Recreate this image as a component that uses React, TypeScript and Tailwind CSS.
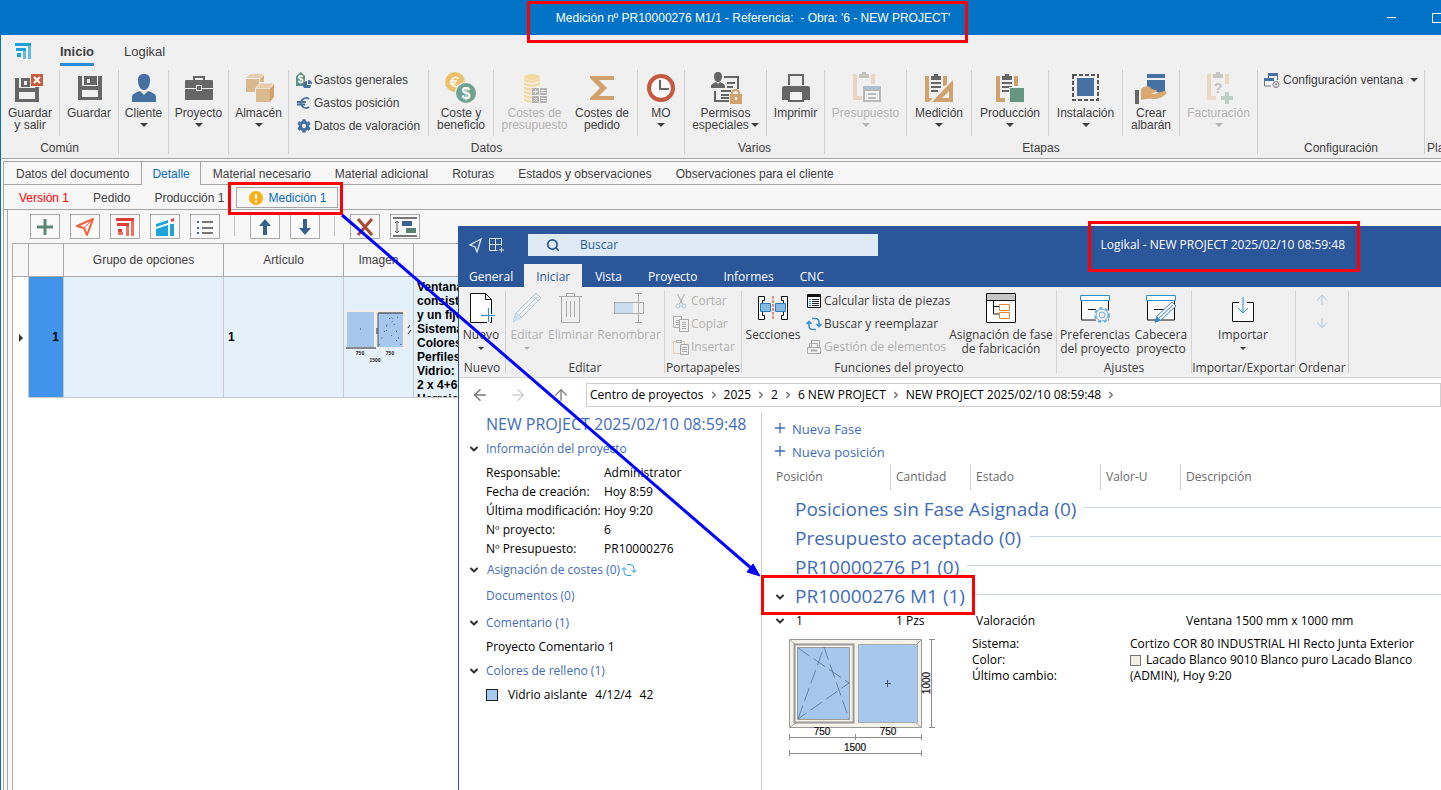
import { ReactNode } from "react";
import { ArrowDown, ArrowLeft, ArrowRight, ArrowUp, ChevronDown, ChevronRight, Plus, Search } from "lucide-react";
import { FaCog } from "react-icons/fa";

/* ---------- small helpers ---------- */

function Svg({ children, size = 32, box = 32 }: { children: ReactNode; size?: number; box?: number }) {
  return (
    <svg width={size} height={size} viewBox={`0 0 ${box} ${box}`} fill="none" aria-hidden="true" className="shrink-0">
      {children}
    </svg>
  );
}

function Caret({ className = "" }: { className?: string }) {
  return (
    <svg width="8" height="4" viewBox="0 0 8 4" aria-hidden="true" className={`inline-block ${className}`}>
      <path d="M0 0h8L4 4z" fill="currentColor" />
    </svg>
  );
}

/* ---------- icons of the main ribbon ---------- */

const floppy = "M0 0h4v10h16V0h4v24H0zM6 0h13v9H6zM9 3v4h3V3zM4 14v7h16v-7z";

const SaveExitIcon = () => (
  <Svg>
    <path transform="translate(1 6)" d={floppy} fill="#666" fillRule="evenodd" />
    <path d="M16 1h14v14H16z" fill="#f0f0f0" />
    <path d="M17 2h12v12H17z" fill="#c75b3f" />
    <path d="M20 5l6 6M26 5l-6 6" stroke="#fff" strokeWidth="2" />
  </Svg>
);

const SaveIcon = () => (
  <Svg>
    <path transform="translate(5 4)" d={floppy} fill="#666" fillRule="evenodd" />
  </Svg>
);

const ClientIcon = () => (
  <Svg>
    <path d="M16 2c4 0 6 2 6 6 0 5-2 10-6 10s-6-5-6-10c0-4 2-6 6-6z" fill="#4470a2" />
    <path d="M4 30v-5c0-3 3-4 8-6l4 4 4-4c5 2 8 3 8 6v5z" fill="#4470a2" />
  </Svg>
);

const BriefcaseIcon = () => (
  <Svg>
    <path d="M11 9V5h10v4" stroke="#666" strokeWidth="2" />
    <path d="M2 9q0-1 1-1h26q1 0 1 1v7H19v-3h-6v3H2z" fill="#666" />
    <path d="M14 14h4v4h-4z" fill="#666" />
    <path d="M2 17h11v2h6v-2h11v10q0 1-1 1H3q-1 0-1-1z" fill="#666" />
  </Svg>
);

const BoxesIcon = () => (
  <Svg>
    <path d="M3 6l4-4h14l-4 4z" fill="#e6cdb0" />
    <path d="M3 7h13v13H3z" fill="#dcb88f" />
    <path d="M17 7l4-4v7h-4z" fill="#d9b080" />
    <path d="M12 17l5-6h14l-4 6z" fill="#e6cdb0" stroke="#f0f0f0" />
    <path d="M12 17h2v14h-2z" fill="#f0f0f0" />
    <path d="M13 17h14v13H13z" fill="#dcb88f" />
    <path d="M27 17l4-5v13l-4 5z" fill="#d2a16d" />
  </Svg>
);

const ExpensesIcon = () => (
  <Svg size={16} box={16}>
    <path d="M0 4l5-4 4 4v10H0z" fill="#5f9281" />
    <text x="4.500" y="11" textAnchor="middle" fontSize="10" fontWeight="700" fill="#fff" fontFamily="Liberation Sans">$</text>
    <circle cx="12" cy="12" r="4.500" fill="#f0f0f0" />
    <path d="M11 9v4h4a4 4 0 1 1-4-4z" fill="#4470a2" />
    <path d="M12 8a4 4 0 0 1 4 4h-4z" fill="#4470a2" />
  </Svg>
);

const EuroIcon = () => (
  <Svg size={16} box={16}>
    <path d="M13 4A5 5 0 1 0 13 12M1 7h9M1 9.500h8" stroke="#4470a2" strokeWidth="1.800" />
  </Svg>
);

const CoinsIcon = () => (
  <Svg>
    <circle cx="10" cy="10" r="10" fill="#efc06c" />
    <path d="M13.500 6.500a4.500 4.500 0 1 0 0 7M5 9h7M5 11.500h6" stroke="#fff" strokeWidth="1.600" />
    <circle cx="21" cy="21" r="11" fill="#f0f0f0" />
    <circle cx="21" cy="21" r="10" fill="#6fa391" />
    <text x="21" y="26.500" textAnchor="middle" fontSize="16" fontWeight="700" fill="#fff" fontFamily="Liberation Sans">$</text>
  </Svg>
);

const BudgetCostIcon = () => (
  <Svg>
    <ellipse cx="13" cy="5" rx="8" ry="3" fill="#f2d9a0" />
    {[6, 10, 14, 18, 22, 26].map((y) => (
      <path key={y} d={`M5 ${y}q8 5 16 0v3q-8 4-16 0z`} fill="#f4dba4" />
    ))}
    <path d="M13 15h16v16H13z" fill="#f0f0f0" />
    <path d="M13 16h7v7h-7zM21 16h7v7h-7zM13 24h7v7h-7zM21 24h7v7h-7z" fill="#b5b5b5" />
    <path d="M14 19.500h5M16.500 17v5M22 18.500h5M22 20.500h5M15 26l3 3M18 26l-3 3M22 26.500h5M22 28.500h5" stroke="#f0f0f0" />
  </Svg>
);

const SigmaIcon = () => (
  <Svg>
    <path d="M4 4h24v4H13l8 8-8 8h15v4H4v-2l10-10L4 6z" fill="#d2a26e" />
  </Svg>
);

const ClockIcon = () => (
  <Svg>
    <circle cx="16" cy="16" r="12" stroke="#c65a40" strokeWidth="4" fill="#f8f8f8" />
    <path d="M15 8v9h9" stroke="#666" strokeWidth="2" />
  </Svg>
);

const PermissionsIcon = () => (
  <Svg>
    <path d="M14 5h14v12M5 19v10h14" stroke="#666" strokeWidth="2" />
    <path d="M17 11h8M17 15h6M11 19h10M11 23h8M11 26h8" stroke="#666" strokeWidth="2" />
    <path d="M8 0c3 0 4 2 4 5s-2 5-4 5-4-2-4-5 1-5 4-5z" fill="#666" />
    <path d="M1 16v-2c0-2 3-3 5-4l2 2 2-2c2 1 5 2 5 4v2z" fill="#666" />
    <path d="M22 24v-3q0-3 3.500-3t3.500 3v3" stroke="#d2a26e" strokeWidth="2" fill="#f0f0f0" />
    <path d="M20 22h12v10H20z" fill="#d2a26e" />
    <path d="M25 25h2v3h-2z" fill="#fff" />
  </Svg>
);

const PrinterIcon = () => (
  <Svg>
    <path d="M9 13V3h14v10" stroke="#666" strokeWidth="2" />
    <path d="M2 16q0-2 2-2h24q2 0 2 2v12H2z" fill="#666" />
    <path d="M9 19h14v10H9z" fill="#f4f4f4" stroke="#666" strokeWidth="2" />
  </Svg>
);

function Clipboard({ x, y = 0, board, clip, lines }: { x: number; y?: number; board: string; clip: string; lines?: boolean }) {
  return (
    <g transform={`translate(${x} ${y})`}>
      <path d="M0 2h4v22h5v4H0zM18 2h4v10h-4z" fill={board} />
      <path d="M6 2h3V0h4v2h3v4H6z" fill={clip} />
      {lines && <path d="M6 9h10M6 13h10M6 17h7" stroke={clip} strokeWidth="2" />}
    </g>
  );
}

const BudgetIcon = () => (
  <Svg>
    <Clipboard x={3} board="#e8d6c2" clip="#c2c2c2" />
    <path d="M13 14h18v4H13z" fill="#adc0d6" />
    <path d="M14 18h16v11H14z" fill="#f4f4f4" stroke="#b8b8b8" strokeWidth="2" />
    <path d="M18 22h8M18 26h8" stroke="#b8b8b8" strokeWidth="2" />
  </Svg>
);

const MeasureIcon = () => (
  <Svg>
    <Clipboard x={2} y={2} board="#d2a26e" clip="#666" lines />
    <path d="M30 6v25H5z" fill="#f0f0f0" />
    <path fillRule="evenodd" d="M30 8v22H9zM26 19v7h-7z" fill="#d2a26e" />
  </Svg>
);

const ProductionIcon = () => (
  <Svg>
    <Clipboard x={2} y={2} board="#d2a26e" clip="#666" lines />
    <path d="M15 15h16v16H15z" fill="#f0f0f0" />
    <path d="M16 16h14v14H16z" fill="#659583" />
  </Svg>
);

const InstallIcon = () => (
  <Svg>
    <path d="M3 3h25v25H3z" stroke="#555" strokeWidth="2" strokeDasharray="4 2" />
    <path d="M7 6h17v18H7z" fill="#4470a2" />
  </Svg>
);

const DeliveryIcon = () => (
  <Svg>
    <path d="M12 2h18v4H12zM12 8h18v11l-5 2q-8-2-13-5z" fill="#4470a2" />
    <path d="M0 18h4v14H0z" fill="#666" />
    <path d="M6 17q4-4 9-2 2 3 7 3 0 3-6 3l3 1 10-3q4 0 2 3-5 5-12 5-7-1-13 1z" fill="#d9a871" />
  </Svg>
);

const InvoiceIcon = () => (
  <Svg>
    <Clipboard x={4} board="#ead9c6" clip="#c6c6c6" />
    <text x="15" y="21" textAnchor="middle" fontSize="14" fontWeight="700" fill="#c2c2c2" fontFamily="Liberation Sans">?</text>
    <path d="M18 24h4v-4h4v4h4v4h-4v4h-4v-4h-4z" fill="#bcd0c8" />
  </Svg>
);

const WindowConfigIcon = () => (
  <Svg size={16} box={16}>
    <path d="M4 1h10v3H4z" fill="#4470a2" />
    <path d="M4.500 4v2M13.500 4v4" stroke="#4470a2" />
    <path d="M0 6h10v3H0z" fill="#4470a2" />
    <path d="M.500 9v5H7" stroke="#777" />
    <circle cx="12" cy="12.500" r="3" stroke="#777" />
    <circle cx="12" cy="12.500" r="1" fill="#777" />
  </Svg>
);

const BrandIcon = () => (
  <Svg size={16} box={16}>
    <path d="M0 0h16v3H0z" fill="#1aa3dc" />
    <path d="M13 3h3v13h-3z" fill="#63b9e0" />
    <path d="M1 5h10v3H1z" fill="#1aa3dc" />
    <path d="M8 8h3v8H8z" fill="#63b9e0" />
    <path d="M2 10h4v4H2z" fill="#1aa3dc" />
  </Svg>
);

/* ---------- main ribbon ---------- */

const Sep = ({ short }: { short?: boolean }) => (
  <div className={`w-px shrink-0 bg-[#cfcfcf] ${short ? "my-[3px]" : "mt-[3px] mb-1"}`} />
);

type RibbonButtonProps = {
  icon: ReactNode;
  lines: string[];
  width: string;
  caret?: boolean;
  disabled?: boolean;
};

function RibbonButton({ icon, lines, width, caret, disabled }: RibbonButtonProps) {
  return (
    <button
      type="button"
      disabled={disabled}
      className={`flex shrink-0 flex-col items-center whitespace-nowrap pt-[5px] leading-3 ${width} ${
        disabled ? "text-[#b3b3b3]" : "text-[#404040]"
      }`}
    >
      {icon}
      <span className="mt-[3px]">{lines[0]}</span>
      {lines[1] && (
        <span className="flex items-center gap-[2px]">
          {lines[1]}
          {caret && <Caret />}
        </span>
      )}
      {caret && !lines[1] && <Caret className="mt-1" />}
    </button>
  );
}

function Group({ label, children, width = "" }: { label?: string; children: ReactNode; width?: string }) {
  return (
    <>
      <section className={`flex shrink-0 flex-col ${width}`}>
        <div className="flex h-[72px]">{children}</div>
        <div className="text-center leading-[18px]">{label}</div>
      </section>
      <Sep />
    </>
  );
}

function SmallItem({ icon, label }: { icon: ReactNode; label: string }) {
  return (
    <button type="button" className="flex h-[23px] items-center gap-[2px] whitespace-nowrap">
      {icon}
      {label}
    </button>
  );
}

function MainRibbon() {
  return (
    <div className="flex h-[92px] shrink-0 overflow-hidden border-b border-[#a6a6a6] bg-[#f0f0f0]">
      <Group label="Común">
        <RibbonButton width="w-[58px]" icon={<SaveExitIcon />} lines={["Guardar", "y salir"]} />
        <Sep short />
        <RibbonButton width="w-[58px]" icon={<SaveIcon />} lines={["Guardar"]} />
      </Group>
      <Group>
        <RibbonButton width="w-[49px]" icon={<ClientIcon />} lines={["Cliente"]} caret />
      </Group>
      <Group>
        <RibbonButton width="w-[59px]" icon={<BriefcaseIcon />} lines={["Proyecto"]} caret />
      </Group>
      <Group>
        <RibbonButton width="w-[59px]" icon={<BoxesIcon />} lines={["Almacén"]} caret />
      </Group>
      <Group label="Datos">
        <div className="flex w-[139px] flex-col items-start pl-[7px] pt-px">
          <SmallItem icon={<ExpensesIcon />} label="Gastos generales" />
          <SmallItem icon={<EuroIcon />} label="Gastos posición" />
          <SmallItem icon={<FaCog size={16} className="p-px text-[#4470a2]" />} label="Datos de valoración" />
        </div>
        <Sep short />
        <RibbonButton width="w-[64px]" icon={<CoinsIcon />} lines={["Coste y", "beneficio"]} />
        <Sep short />
        <RibbonButton width="w-[81px]" icon={<BudgetCostIcon />} lines={["Costes de", "presupuesto"]} disabled />
        <RibbonButton width="w-[54px]" icon={<SigmaIcon />} lines={["Costes de", "pedido"]} />
        <div className="w-2" />
        <Sep short />
        <RibbonButton width="w-[46px]" icon={<ClockIcon />} lines={["MO"]} caret />
      </Group>
      <Group label="Varios">
        <RibbonButton width="w-[81px]" icon={<PermissionsIcon />} lines={["Permisos", "especiales"]} caret />
        <Sep short />
        <RibbonButton width="w-[57px]" icon={<PrinterIcon />} lines={["Imprimir"]} />
      </Group>
      <Group label="Etapas">
        <RibbonButton width="w-[81px]" icon={<BudgetIcon />} lines={["Presupuesto"]} caret disabled />
        <Sep short />
        <RibbonButton width="w-[64px]" icon={<MeasureIcon />} lines={["Medición"]} caret />
        <Sep short />
        <RibbonButton width="w-[76px]" icon={<ProductionIcon />} lines={["Producción"]} caret />
        <Sep short />
        <RibbonButton width="w-[73px]" icon={<InstallIcon />} lines={["Instalación"]} caret />
        <Sep short />
        <RibbonButton width="w-[56px]" icon={<DeliveryIcon />} lines={["Crear", "albarán"]} />
        <Sep short />
        <RibbonButton width="w-[77px]" icon={<InvoiceIcon />} lines={["Facturación"]} caret disabled />
      </Group>
      <Group label="Configuración" width="w-[166px]">
        <div className="flex items-start pl-[6px] pt-px">
          <button type="button" className="flex h-[23px] items-center whitespace-nowrap">
            <WindowConfigIcon />
            <span className="ml-[3px] mr-[7px]">Configuración ventana</span>
            <Caret />
          </button>
        </div>
      </Group>
      <Group label="Plazos" width="w-[40px]">
        {null}
      </Group>
    </div>
  );
}

/* ---------- toolbar over the grid ---------- */

const toolIcons: (ReactNode | null)[] = [
  <Svg key="add" size={20} box={20}>
    <path d="M10 2v16M2 10h16" stroke="#5f8573" strokeWidth="3" />
  </Svg>,
  <Svg key="send" size={20} box={20}>
    <path d="M18 2L2 9l7 2 3 7z" stroke="#f0613c" strokeWidth="2" strokeLinejoin="round" />
    <path d="M18 2l-8 8" stroke="#f0613c" />
  </Svg>,
  <Svg key="frames" size={20} box={20}>
    <path d="M1 1h18v3H1zM2 6h12v3H2zM3 12h4v3H3z" fill="#e23b38" />
    <path d="M16 4h3v15h-3zM11 9h3v10h-3zM3 15h5v3H3z" fill="#ee7160" />
  </Svg>,
  <Svg key="build" size={20} box={20}>
    <path d="M1 7l12-4v3L1 10zM1 12l12-4v11H1zM15 7h4v12h-4z" fill="#1ea4dc" />
    <path d="M16 2l3-1v3l-3 1z" fill="#ee3a4c" />
  </Svg>,
  <Svg key="list" size={20} box={20}>
    <path d="M7 5h11M7 11h11M7 16h11" stroke="#777" strokeWidth="2" />
    <path d="M2 4h2v2H2zM2 10h2v2H2zM2 15h2v2H2z" fill="#3d6690" />
  </Svg>,
  null,
  <Svg key="up" size={20} box={20}>
    <path d="M8 18V9H4l6-7 6 7h-4v9z" fill="#38618c" />
  </Svg>,
  <Svg key="down" size={20} box={20}>
    <path d="M8 2v9H4l6 7 6-7h-4V2z" fill="#38618c" />
  </Svg>,
  null,
  <Svg key="remove" size={20} box={20}>
    <path d="M3 2l14 16M17 2L3 18" stroke="#a94a32" strokeWidth="3" />
  </Svg>,
  <svg key="rows" width="24" height="20" viewBox="0 0 24 20" fill="none">
    <path d="M0 1h24M0 19h24" stroke="#777" strokeWidth="2" />
    <path d="M4 4v12M2 6l2-2 2 2M2 14l2 2 2-2" stroke="#555" />
    <path d="M9 4h10v5H9z" fill="#3a628f" />
    <path d="M13 11h10v5H13z" fill="#568070" />
  </svg>,
];

const toolNames = ["Añadir", "Enviar", "Logikal", "Montaje", "Lista", "", "Subir", "Bajar", "", "Eliminar", "Altura de filas"];

function Toolbar() {
  return (
    <div className="flex h-[33px] shrink-0 items-start gap-[10px] pl-[22px] pt-1">
      {toolIcons.map((icon, i) =>
        icon ? (
          <button
            key={i}
            type="button"
            aria-label={toolNames[i]}
            className="flex h-[25px] w-[30px] items-center justify-center border border-[#a9a9a9] bg-[#fafafa]"
          >
            {icon}
          </button>
        ) : (
          <div key={i} className="w-[10px] pl-1">
            <div className="mt-[2px] h-5 w-px bg-[#bcc4ce]" />
          </div>
        )
      )}
    </div>
  );
}

const Thumbnail = () => (
  <svg width="69" height="60" viewBox="0 0 69 60" fill="none" aria-label="Ventana">
    <path d="M2 3h30v38H2zM32 3h31v38H32z" fill="#f3efe8" />
    <path d="M3 5h27v35H3zM34 6h25v34H34z" fill="#a6c8ee" />
    <path d="M2 41h30M34 6h25M33 21v6" stroke="#222" strokeWidth="1" />
    <path d="M34 6v34" stroke="#555" />
    <path d="M35 38l12-30 10 30M54 10L40 21l15 15" stroke="#345" strokeWidth="1" strokeDasharray="1 6" />
    <path d="M16 22h1M64 27l3-4M64 21l2-3" stroke="#333" />
    <text x="16" y="48" fontSize="5" textAnchor="middle" fill="#222" fontFamily="Liberation Sans">750</text>
    <text x="46" y="48" fontSize="5" textAnchor="middle" fill="#222" fontFamily="Liberation Sans">750</text>
    <text x="31" y="55" fontSize="5" textAnchor="middle" fill="#222" fontFamily="Liberation Sans">1500</text>
  </svg>
);

const description = [
  "Ventana",
  "consistente",
  "y un fijo",
  "Sistema:",
  "Colores:",
  "Perfiles:",
  "Vidrio:",
  "2 x 4+6",
  "Herraje",
];

function OptionsGrid() {
  const th = "border-r border-b border-[#ababab] font-normal";
  return (
    <table className="w-full table-fixed border-separate border-spacing-0">
      <colgroup>
        <col className="w-[16px]" />
        <col className="w-[35px]" />
        <col className="w-[160px]" />
        <col className="w-[120px]" />
        <col className="w-[70px]" />
        <col />
      </colgroup>
      <thead className="bg-[#f7f7f7]">
        <tr className="h-[33px]">
          <th className={th} />
          <th className={th} />
          <th className={th}>Grupo de opciones</th>
          <th className={th}>Artículo</th>
          <th className={th}>Imagen</th>
          <th className="border-b border-[#ababab]" />
        </tr>
      </thead>
      <tbody>
        <tr className="h-[121px] bg-[#e4f1fa] font-bold text-black">
          <td className="border-r border-[#c8c8c8] bg-white">
            <svg width="4" height="8" viewBox="0 0 4 8" className="mx-auto" aria-hidden="true">
              <path d="M0 0l4 4-4 4z" fill="#333" />
            </svg>
          </td>
          <td className="border-r border-b border-[#c8c8c8] bg-[#4094ea] pr-1 text-right">1</td>
          <td className="border-r border-b border-[#c8c8c8]" />
          <td className="border-r border-b border-[#c8c8c8] pl-1">1</td>
          <td className="border-r border-b border-[#c8c8c8]">
            <Thumbnail />
          </td>
          <td className="border-b border-[#c8c8c8] pl-[3px]">
            <div className="h-[119px] overflow-hidden whitespace-nowrap pt-[2px] leading-[14px]">
              {description.map((line) => (
                <div key={line}>{line}</div>
              ))}
            </div>
          </td>
        </tr>
      </tbody>
    </table>
  );
}

/* ---------- Logikal window icons ---------- */

const NewFileIcon = () => (
  <Svg>
    <path d="M5.500 2.500h15l6 6v23h-21z" fill="#fff" stroke="#111" />
    <path d="M20.500 2.500v6h6" stroke="#111" />
    <path d="M23.500 16v16M15 24.500h16" stroke="#f0f0f0" strokeWidth="3" />
    <path d="M23.500 17v14M16 24.500h14" stroke="#2b8fd0" />
  </Svg>
);
const PencilIcon = () => (
  <Svg>
    <path d="M2 31l3-9L25 2l5 5-19 19zM5 22l6 5M22 5l5 5M8 24L26 6" stroke="#b4cfe2" />
    <path d="M2 31l3-8 5 5z" fill="#c9dfee" />
  </Svg>
);
const TrashIcon = () => (
  <Svg>
    <path d="M4 5.500h23M11.500 5V2.500h8V5M6.500 6v25.500h18V6M11.500 10v16M15.500 10v16M19.500 10v16" stroke="#a9a9a9" />
  </Svg>
);
const RenameIcon = () => (
  <Svg>
    <path d="M1 11h19v11H1z" fill="#c8dff0" />
    <path d="M1.500 11.500h29v11h-29zM25.500 2v30M22 2.500h7M22 31.500h7" stroke="#a9a9a9" />
  </Svg>
);
const SectionsIcon = () => (
  <Svg>
    <path d="M1.500 5.500h6v4h-2v15h2v4h-6zM30.500 5.500h-6v4h2v15h-2v4h6z" fill="#fff" stroke="#111" />
    <path d="M3.500 12.500h10v8h-10zM18.500 12.500h10v8h-10z" fill="#84b9e6" stroke="#2f7bbd" />
    <path d="M16 5v24" stroke="#e02020" strokeDasharray="3 1" />
  </Svg>
);
const PhaseIcon = () => (
  <Svg>
    <path d="M1.500 2.500h29v29h-29z" fill="#fff" stroke="#111" />
    <path d="M2 3h28v6H2z" fill="#c6c6c6" />
    <path d="M1 9.500h30M8.500 10v13h6M8.500 15.500h6" stroke="#111" />
    <path d="M14.500 13.500h10v6h-10zM14.500 21.500h10v6h-10z" stroke="#ee8233" />
  </Svg>
);
const PreferencesIcon = () => (
  <Svg>
    <path d="M2.500 9v20h27V9" fill="#fafafa" stroke="#111" />
    <path d="M1.500 4.500h29v5h-29z" fill="#fff" stroke="#2b8fd0" />
    <path d="M9 18.500h8" stroke="#111" />
    <circle cx="23" cy="24" r="8" fill="#f4f4f4" />
    <circle cx="23" cy="24" r="7" stroke="#6fb0de" strokeWidth="2" strokeDasharray="3 3" />
    <circle cx="23" cy="24" r="6" stroke="#6fb0de" />
    <circle cx="23" cy="24" r="3" stroke="#6fb0de" />
  </Svg>
);
const HeaderIcon = () => (
  <Svg>
    <path d="M2.500 9v20h27V9" fill="#fafafa" stroke="#111" />
    <path d="M1.500 4.500h29v5h-29z" fill="#fff" stroke="#2b8fd0" />
    <path d="M9 18.500h10" stroke="#111" />
    <path d="M10 31l2-6 15-14 4 4-15 14z" fill="#f4f4f4" stroke="#3d85c0" />
    <path d="M14 27L28 14M10 31l2-5 3 3z" stroke="#3d85c0" fill="#3d85c0" />
  </Svg>
);
const ImportIcon = () => (
  <Svg>
    <path d="M12 11.500H5.500v19h21v-19H20" stroke="#111" />
    <path d="M6 12h20v18H6z" fill="#fafafa" />
    <path d="M16 6v16M11 17l5 5 5-5" stroke="#2b8fd0" />
  </Svg>
);
const CutIcon = () => (
  <Svg size={16} box={16}>
    <path d="M4.500 1l5 10M11.500 1l-5 10" stroke="#a9a9a9" />
    <circle cx="5" cy="13" r="2" stroke="#a5cbe6" />
    <circle cx="11" cy="13" r="2" stroke="#a5cbe6" />
  </Svg>
);
const CopyIcon = () => (
  <Svg size={16} box={16}>
    <path d="M.500.500h8v11h-8zM3 4.500h4M3 6.500h4M3 8.500h3" stroke="#b0b0b0" />
    <path d="M6.500 3.500h9v12h-9z" fill="#f0f0f0" stroke="#a9a9a9" />
    <path d="M9 6.500h4M9 8.500h4M9 10.500h4M9 12.500h4" stroke="#a9a9a9" />
  </Svg>
);
const PasteIcon = () => (
  <Svg size={16} box={16}>
    <path d="M.500 2.500h11v12h-11z" stroke="#efcdb0" />
    <path d="M3.500 3.500v-2h5v2z" stroke="#b0b0b0" fill="#f0f0f0" />
    <path d="M7.500 5.500h8v10h-8z" fill="#f0f0f0" stroke="#a9a9a9" />
    <path d="M9 8.500h5M9 10.500h5M9 12.500h5" stroke="#a9a9a9" />
  </Svg>
);
const PartsListIcon = () => (
  <Svg size={16} box={16}>
    <path d="M1.500 1.500h13v13h-13z" stroke="#111" fill="#fff" />
    <path d="M1 3h14" stroke="#111" strokeWidth="2" />
    <path d="M6 6.500h7M6 8.500h7M6 10.500h7M6 12.500h7" stroke="#222" />
    <path d="M3 6.500h2M3 8.500h2M3 10.500h2M3 12.500h2" stroke="#2b8fd0" />
  </Svg>
);
const StackIcon = () => (
  <Svg size={16} box={16}>
    <path d="M5.500 8V1.500h8V8M3.500 8V4.500h8V8M1.500 8.500h13v6h-13z" stroke="#a9a9a9" />
    <path d="M5 11.500h6" stroke="#a9a9a9" strokeWidth="2" />
  </Svg>
);

// two half circles chasing each other
const CycleIcon = ({ bold }: { bold?: boolean }) => (
  <Svg size={16} box={16}>
    <path
      d="M6 2.500h3q4 0 4 4V10M10.500 8l2.500 2.500L15.500 8M10 13.500H7q-4 0-4-4V6M.500 8L3 5.500 5.500 8"
      stroke={bold ? "#3d93d0" : "#2b9bd0"}
      strokeWidth={bold ? 1.6 : 1}
    />
  </Svg>
);

/* ---------- Logikal window ---------- */

const WinSep = () => <div className="mt-1 mb-1 w-px shrink-0 bg-[#d2d2d2]" />;

function WinGroup({ label, width, children }: { label: string; width: string; children: ReactNode }) {
  return (
    <>
      <section className={`flex shrink-0 flex-col items-center ${width}`}>
        <div className="flex h-[73px] w-full">{children}</div>
        <div className="whitespace-nowrap leading-4">{label}</div>
      </section>
      <WinSep />
    </>
  );
}

function WinButton({ icon, lines, width, caret, disabled }: RibbonButtonProps) {
  return (
    <button
      type="button"
      disabled={disabled}
      className={`flex shrink-0 flex-col items-center whitespace-nowrap pt-1 leading-[14px] ${width} ${
        disabled ? "text-[#b0b0b0]" : "text-[#3b3b3b]"
      }`}
    >
      {icon}
      <span className="mt-[5px]">{lines[0]}</span>
      {lines[1] && <span>{lines[1]}</span>}
      {caret && <Caret className="mt-[5px] h-[3px] w-[6px]" />}
    </button>
  );
}

function WinItem({ icon, label, disabled }: { icon: ReactNode; label: string; disabled?: boolean }) {
  return (
    <button
      type="button"
      disabled={disabled}
      className={`flex h-[23px] items-center gap-[2px] whitespace-nowrap ${disabled ? "text-[#b0b0b0]" : ""}`}
    >
      {icon}
      {label}
    </button>
  );
}

function WinRibbon() {
  return (
    <div className="flex h-[91px] shrink-0 overflow-hidden border-b border-[#d2d2d2] bg-[#f0f0f0] text-[#3b3b3b]">
      <WinGroup label="Nuevo" width="w-[46px]">
        <WinButton width="w-[44px]" icon={<NewFileIcon />} lines={["Nuevo"]} caret />
      </WinGroup>
      <WinGroup label="Editar" width="w-[158px]">
        <WinButton width="w-[42px]" icon={<PencilIcon />} lines={["Editar"]} caret disabled />
        <WinButton width="w-[46px]" icon={<TrashIcon />} lines={["Eliminar"]} disabled />
        <WinButton width="w-[70px]" icon={<RenameIcon />} lines={["Renombrar"]} disabled />
      </WinGroup>
      <WinGroup label="Portapapeles" width="w-[76px]">
        <div className="flex flex-col items-start pl-2 pt-[2px]">
          <WinItem icon={<CutIcon />} label="Cortar" disabled />
          <WinItem icon={<CopyIcon />} label="Copiar" disabled />
          <WinItem icon={<PasteIcon />} label="Insertar" disabled />
        </div>
      </WinGroup>
      <WinGroup label="Funciones del proyecto" width="w-[314px]">
        <WinButton width="w-[62px]" icon={<SectionsIcon />} lines={["Secciones"]} />
        <div className="flex w-[144px] flex-col items-start pl-[2px] pt-[2px]">
          <WinItem icon={<PartsListIcon />} label="Calcular lista de piezas" />
          <WinItem icon={<CycleIcon bold />} label="Buscar y reemplazar" />
          <WinItem icon={<StackIcon />} label="Gestión de elementos" disabled />
        </div>
        <WinButton width="w-[106px]" icon={<PhaseIcon />} lines={["Asignación de fase", "de fabricación"]} />
      </WinGroup>
      <WinGroup label="Ajustes" width="w-[134px]">
        <WinButton width="w-[76px]" icon={<PreferencesIcon />} lines={["Preferencias", "del proyecto"]} />
        <WinButton width="w-[56px]" icon={<HeaderIcon />} lines={["Cabecera", "proyecto"]} />
      </WinGroup>
      <WinGroup label="Importar/Exportar" width="w-[103px]">
        <WinButton width="w-[102px]" icon={<ImportIcon />} lines={["Importar"]} caret />
      </WinGroup>
      <WinGroup label="Ordenar" width="w-[52px]">
        <div className="flex w-full flex-col items-center gap-[7px] pt-[5px] text-[#a9cbe2]">
          <button type="button" aria-label="Subir">
            <ArrowUp size={16} strokeWidth={1.5} />
          </button>
          <button type="button" aria-label="Bajar">
            <ArrowDown size={16} strokeWidth={1.5} />
          </button>
        </div>
      </WinGroup>
    </div>
  );
}

const crumbs = ["Centro de proyectos", "2025", "2", "6 NEW PROJECT", "NEW PROJECT 2025/02/10 08:59:48"];

function Breadcrumbs() {
  return (
    <div className="flex h-[34px] shrink-0 items-center pl-3">
      <button type="button" aria-label="Atrás" className="text-[#777]">
        <ArrowLeft size={18} strokeWidth={2} />
      </button>
      <button type="button" aria-label="Adelante" className="ml-5 text-[#d0d0d0]">
        <ArrowRight size={18} strokeWidth={2} />
      </button>
      <button type="button" aria-label="Arriba" className="ml-[25px] text-[#888]">
        <ArrowUp size={18} strokeWidth={2} />
      </button>
      <nav className="ml-4 flex h-6 flex-1 items-center border border-[#cfcfcf] pl-[3px]">
        {crumbs.map((crumb) => (
          <span key={crumb} className="flex items-center whitespace-nowrap">
            <a href="#">{crumb}</a>
            <ChevronRight size={10} strokeWidth={4} className="mx-[5px] text-[#777]" />
          </span>
        ))}
      </nav>
    </div>
  );
}

const projectInfo = [
  ["Responsable:", "Administrator"],
  ["Fecha de creación:", "Hoy 8:59"],
  ["Última modificación:", "Hoy 9:20"],
  ["Nº proyecto:", "6"],
  ["Nº Presupuesto:", "PR10000276"],
];

function PanelHeading({ label, height, open = true, extra }: { label: string; height: string; open?: boolean; extra?: ReactNode }) {
  return (
    <button type="button" className={`flex items-center text-[#3f6cb8] ${height}`}>
      <span className="w-[18px] text-[#333]">{open && <ChevronDown size={12} strokeWidth={4} />}</span>
      {label}
      {extra}
    </button>
  );
}

function ProjectPanel() {
  return (
    <aside className="flex w-[303px] shrink-0 flex-col items-start border-r border-[#d0d0d0] pl-[9px]">
      <h2 className="pl-[18px] text-[16px] leading-[25px] whitespace-nowrap text-[#3f6cb8]">
        NEW PROJECT 2025/02/10 08:59:48
      </h2>
      <PanelHeading label="Información del proyecto" height="h-[26px] pb-[3px]" />
      <table className="ml-[18px] border-collapse">
        <tbody>
          {projectInfo.map(([name, value]) => (
            <tr key={name} className="h-[19px] whitespace-nowrap">
              <th scope="row" className="w-[118px] text-left font-normal">
                {name}
              </th>
              <td>{value}</td>
            </tr>
          ))}
        </tbody>
      </table>
      <PanelHeading label="Asignación de costes (0)" height="h-6 gap-px" extra={<CycleIcon />} />
      <PanelHeading label="Documentos (0)" height="h-7" open={false} />
      <PanelHeading label="Comentario (1)" height="h-[25px]" />
      <p className="h-6 pl-[18px] leading-6">Proyecto Comentario 1</p>
      <PanelHeading label="Colores de relleno (1)" height="h-6" />
      <div className="flex h-6 items-center pl-[18px]">
        <span className="size-3 border border-[#222] bg-[#a5c8ee]" />
        <span className="ml-[10px]">Vidrio aislante</span>
        <span className="ml-2">4/12/4</span>
        <span className="ml-2">42</span>
      </div>
    </aside>
  );
}

const WindowDrawing = () => (
  <svg width="150" height="122" viewBox="0 0 150 122" fill="none" aria-label="Ventana 1500 mm x 1000 mm">
    <path d="M2.500 3.500h132v88H2.500z" fill="#f5f2ea" stroke="#999" />
    <path d="M3 4l6 5M134 4l-5 5M3 91l6-4M134 91l-5-4" stroke="#aaa" />
    <path d="M7.500 8.500h59v78h-59z" fill="#f5f2ea" stroke="#9a9a9a" strokeWidth="2" />
    <path d="M10.500 11.500h52v72h-52z" fill="#a6c8ee" stroke="#9a9a9a" />
    <path d="M71.500 8.500h59v78h-59z" fill="#a6c8ee" stroke="#aaa" />
    <path d="M11 83l26-72 25 72M11 12l51 35-51 36" stroke="#56708f" strokeWidth=".8" strokeDasharray="14 5" />
    <path d="M98 47.500h6M100.500 44v7" stroke="#456" />
    <path d="M144.500 3v89M142 3.500h6M142 91.500h6M2 101.500h133M2.500 98v6M68.500 98v6M134.500 98v6M2 117.500h133M2.500 114v6M134.500 114v6" stroke="#8c8c8c" />
    <g fontSize="10" textAnchor="middle" fill="#111" stroke="#111" strokeWidth=".2" fontFamily="Liberation Sans">
      <text x="35" y="99">750</text>
      <text x="101" y="99">750</text>
      <text x="68" y="115">1500</text>
      <text transform="translate(143 47) rotate(-90)">1000</text>
    </g>
  </svg>
);

const phases = [
  { name: "Posiciones sin Fase Asignada (0)" },
  { name: "Presupuesto aceptado (0)" },
  { name: "PR10000276 P1 (0)" },
  { name: "PR10000276 M1 (1)", open: true },
];

const columns = ["Posición", "Cantidad", "Estado", "Valor-U", "Descripción"];

function PositionsPanel() {
  return (
    <main className="min-w-0 flex-1 pt-[6px]">
      {["Nueva Fase", "Nueva posición"].map((action) => (
        <button key={action} type="button" className="flex h-[23px] items-center pl-[10px] text-[13px] text-[#3f6cb8]">
          <Plus size={16} strokeWidth={2} className="mr-1 mb-1" />
          {action}
        </button>
      ))}
      <table className="w-full table-fixed border-separate border-spacing-0">
        <colgroup>
          <col className="w-[129px]" />
          <col className="w-[80px]" />
          <col className="w-[130px]" />
          <col className="w-[80px]" />
          <col />
        </colgroup>
        <thead>
          <tr>
            {columns.map((column, i) => (
              <th key={column} className="h-[31px] p-0 text-left align-top font-normal text-[#6a6a6a]">
                <div
                  className={`h-[26px] leading-[26px] ${i === 0 ? "pl-[14px]" : "pl-[5px]"} ${
                    i < 4 ? "border-r border-[#d0d0d0]" : ""
                  }`}
                >
                  {column}
                </div>
              </th>
            ))}
          </tr>
        </thead>
        <tbody>
          {phases.map(({ name, open }) => (
            <tr key={name}>
              <td colSpan={5} className="h-[29px]">
                <div className="flex items-center">
                  <span className="w-[33px] pl-3">{open && <ChevronDown size={12} strokeWidth={4} className="text-[#333]" />}</span>
                  <span className="text-[19px] leading-[29px] whitespace-nowrap text-[#3f6cb8]">{name}</span>
                  <span className="mb-[5px] ml-2 h-px flex-1 bg-[#c9d8e6]" />
                </div>
              </td>
            </tr>
          ))}
          <tr className="h-5 whitespace-nowrap">
            <td>
              <div className="flex items-center pl-3">
                <ChevronDown size={12} strokeWidth={4} className="mr-[10px] text-[#333]" />1
              </div>
            </td>
            <td className="pl-[5px]">1 Pzs</td>
            <td className="pl-[5px]">Valoración</td>
            <td />
            <td className="pl-[5px]">Ventana 1500 mm x 1000 mm</td>
          </tr>
          <tr>
            <td colSpan={5}>
              <div className="flex pl-[25px] pt-[5px]">
                <WindowDrawing />
                <dl className="ml-[35px] grid auto-rows-[16px] grid-cols-[158px_auto] leading-4 whitespace-nowrap">
                  <dt>Sistema:</dt>
                  <dd>Cortizo COR 80 INDUSTRIAL HI Recto Junta Exterior</dd>
                  <dt>Color:</dt>
                  <dd className="flex items-center gap-[5px]">
                    <span className="size-[11px] border border-[#777] bg-[#f3efe6]" />
                    Lacado Blanco 9010 Blanco puro Lacado Blanco
                  </dd>
                  <dt>Último cambio:</dt>
                  <dd>(ADMIN), Hoy 9:20</dd>
                </dl>
              </div>
            </td>
          </tr>
        </tbody>
      </table>
    </main>
  );
}

function LogikalWindow() {
  const tabs = ["Vista", "Proyecto", "Informes", "CNC"];
  return (
    <div className="absolute top-[226px] right-0 bottom-0 left-[458px] flex flex-col overflow-hidden border-l border-[#2b579a] bg-white font-['Open_Sans',sans-serif] text-[12px] text-black">
      <header className="flex h-[38px] shrink-0 items-center bg-[#2b579a] pl-[9px] text-white">
        <Svg size={16} box={16}>
          <path d="M13 2L2 8l5 2 2 5z" stroke="#dce6f3" strokeWidth="1.300" />
        </Svg>
        <span className="w-[4px]" />
        <Svg size={16} box={16}>
          <path d="M13.500 9V1.500h-12v12h8M7.500 1v13M7.500 7.500h6M1.500 7.500h6M13.500 10.500v5M11 13h5" stroke="#dce6f3" />
        </Svg>
        <label className="ml-6 flex h-[22px] w-[350px] items-center bg-[#deebf7] pl-[18px] text-[#2b579a]">
          <Search size={14} strokeWidth={3} className="shrink-0" />
          <input
            type="text"
            aria-label="Buscar"
            placeholder="Buscar"
            className="ml-5 w-full bg-transparent outline-none placeholder:text-[#2b579a]"
          />
        </label>
        <h1 className="mr-24 ml-auto whitespace-nowrap">Logikal - NEW PROJECT 2025/02/10 08:59:48</h1>
      </header>
      <div className="flex h-[23px] shrink-0 bg-[#2b579a] pl-[10px] text-white">
        <button type="button" className="mr-[11px] pt-[2px]">
          General
        </button>
        <button type="button" className="w-[58px] bg-[#f0f0f0] pt-[2px] text-[#2b579a]">
          Iniciar
        </button>
        {tabs.map((tab) => (
          <button key={tab} type="button" className="px-[13px] pt-[2px]">
            {tab}
          </button>
        ))}
      </div>
      <WinRibbon />
      <Breadcrumbs />
      <div className="flex min-h-0 flex-1">
        <ProjectPanel />
        <PositionsPanel />
      </div>
    </div>
  );
}

/* ---------- call-outs drawn over both windows ---------- */

function CallOuts() {
  const box = "pointer-events-none absolute border-3 border-[#fe0000]";
  return (
    <>
      <div className={`${box} top-px left-[527px] h-[42px] w-[441px]`} />
      <div className={`${box} top-[182px] left-[228px] h-[33px] w-[115px]`} />
      <div className={`${box} top-[221px] left-[1088px] h-[51px] w-[272px]`} />
      <div className={`${box} top-[575px] left-[761px] h-[40px] w-[214px]`} />
      <svg className="pointer-events-none absolute inset-0 h-full w-full" aria-hidden="true">
        <path d="M342 215L751 568" stroke="#0000fe" strokeWidth="3" />
        <path d="M760 576l-13-4 6-8z" fill="#0000fe" stroke="#0000fe" />
      </svg>
    </>
  );
}

export default function App() {
  const docTabs = ["Material necesario", "Material adicional", "Roturas", "Estados y observaciones", "Observaciones para el cliente"];
  return (
    <div className="relative flex h-screen w-full flex-col overflow-hidden bg-[#f7f7f7] font-['Liberation_Sans',Arial,sans-serif] text-[12px] text-[#404040]">
      <header className="-mr-[65px] flex h-[35px] shrink-0 bg-[#0173c7] text-white">
        <div className="flex-1" />
        <h1 className="leading-9 whitespace-pre">Medición nº PR10000276 M1/1 - Referencia:  - Obra: '6 - NEW PROJECT'</h1>
        <div className="flex flex-1 justify-end">
          <button type="button" aria-label="Minimizar" className="flex w-[46px] items-center justify-center">
            <span className="h-px w-[9px] bg-white" />
          </button>
          <button type="button" aria-label="Maximizar" className="flex w-[46px] items-center justify-center">
            <span className="size-[10px] border border-white" />
          </button>
          <button type="button" aria-label="Cerrar" className="w-[46px]" />
        </div>
      </header>

      <div className="flex min-h-0 flex-1 flex-col border-l border-[#0173c7]">
        <nav className="flex h-8 shrink-0 items-start bg-[#f0f0f0] pl-[14px] pt-2 text-[13px]">
          <BrandIcon />
          <button type="button" className="ml-[29px] border-b-3 border-[#2b8ad9] pt-px pb-[3px] leading-4 font-bold">
            Inicio
          </button>
          <button type="button" className="ml-[30px] pt-px leading-4">
            Logikal
          </button>
        </nav>
        <MainRibbon />

        <div className="mt-[2px] ml-[2px] flex min-h-0 flex-1 flex-col border-t border-l border-[#a6a6a6]">
          <div className="flex h-[23px] shrink-0 border-b border-[#a6a6a6]">
            <button type="button" className="px-3 pt-[2px]">
              Datos del documento
            </button>
            <button type="button" className="-mb-px border-x border-[#a6a6a6] bg-[#f7f7f7] px-[10px] pt-px text-[#0a6cbd]">
              Detalle
            </button>
            {docTabs.map((tab) => (
              <button key={tab} type="button" className="px-3 pt-[2px]">
                {tab}
              </button>
            ))}
          </div>
          <div className="flex h-[25px] shrink-0 items-center gap-6 border-b border-[#a6a6a6] pt-px pl-[15px]">
            <button type="button" className="text-[#fe0000]">
              Versión 1
            </button>
            <button type="button">Pedido</button>
            <button type="button">Producción 1</button>
            <button
              type="button"
              className="-ml-3 flex h-[21px] w-[102px] items-center gap-[5px] border border-[#a6a6a6] pl-3 text-[#0a6cbd]"
            >
              <Svg size={14} box={14}>
                <circle cx="7" cy="7" r="7" fill="#fbae17" />
                <path d="M7 3v5M7 9.500v2" stroke="#fff" strokeWidth="2" />
              </Svg>
              Medición 1
            </button>
          </div>
          <div className="ml-[3px] flex min-h-0 flex-1 flex-col border-l border-[#a6a6a6]">
            <Toolbar />
            <div className="ml-1 min-h-0 flex-1 border-t border-l border-[#ababab] bg-white">
              <OptionsGrid />
            </div>
          </div>
        </div>
      </div>

      <LogikalWindow />
      <CallOuts />
    </div>
  );
}
